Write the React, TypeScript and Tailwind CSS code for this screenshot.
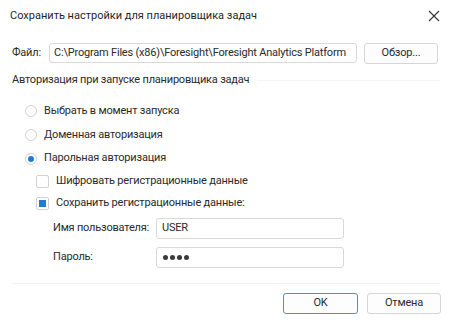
import React from "react";

function Radio({ checked, label }: { checked?: boolean; label: string }) {
  return (
    <div className="flex items-center">
      <div className="w-[12px] h-[12px] rounded-full border border-[#d2d2d2] bg-white flex items-center justify-center">
        {checked && <div className="w-[6px] h-[6px] rounded-full bg-[#1e7bd6]" />}
      </div>
      <span className="ml-[7px] whitespace-nowrap">{label}</span>
    </div>
  );
}

function Check({ checked, label }: { checked?: boolean; label: string }) {
  return (
    <div className="flex items-center">
      <div className="w-[13px] h-[13px] rounded-[2px] border border-[#d2d2d2] bg-white flex items-center justify-center">
        {checked && <div className="w-[7px] h-[7px] bg-[#1e7bd6]" />}
      </div>
      <span className="ml-[7px] whitespace-nowrap">{label}</span>
    </div>
  );
}

export default function App() {
  return (
    <div
      className="w-[451px] h-[326px] bg-white text-[#2a2a2a] text-[11px] tracking-[-0.2px] flex flex-col overflow-hidden"
      style={{ fontFamily: 'Roboto, "Noto Sans", sans-serif' }}
    >
      {/* Title bar */}
      <div className="h-[32px] flex items-center justify-between pl-[10px] pr-[10px] shrink-0">
        <span className="text-[11px] tracking-normal text-[#1f1f1f] whitespace-nowrap">Сохранить настройки для планировщика задач</span>
        <svg width="12" height="12" viewBox="0 0 12 12" className="mr-[1px]">
          <path d="M1 1 L11 11 M11 1 L1 11" stroke="#333" strokeWidth="1.1" fill="none" />
        </svg>
      </div>

      {/* File row */}
      <div className="mt-[10px] h-[22px] flex items-center pl-[12px] shrink-0">
        <span className="w-[37px] whitespace-nowrap">Файл:</span>
        <div className="w-[308px] h-[20px] border border-[#d9d9d9] rounded-[3px] flex items-center pl-[4px] whitespace-nowrap overflow-hidden">
          C:\Program Files (x86)\Foresight\Foresight Analytics Platform
        </div>
        <div className="ml-[7px] w-[74px] h-[21px] border border-[#d6d6d6] rounded-[3px] bg-[#fdfdfd] flex items-center justify-center whitespace-nowrap">
          Обзор...
        </div>
      </div>

      {/* Group label */}
      <div className="mt-[8px] h-[16px] flex items-center pl-[12px] pr-[11px] shrink-0">
        <span className="whitespace-nowrap">Авторизация при запуске планировщика задач</span>
        <div className="flex-1 h-px bg-[#f4f4f4] ml-[8px]" />
      </div>

      {/* Radios */}
      <div className="mt-[11px] pl-[25px] flex flex-col shrink-0">
        <div className="h-[24px] flex items-center">
          <Radio label="Выбрать в момент запуска" />
        </div>
        <div className="h-[24px] flex items-center">
          <Radio label="Доменная авторизация" />
        </div>
        <div className="h-[23px] flex items-center">
          <Radio checked label="Парольная авторизация" />
        </div>
      </div>

      {/* Checkboxes */}
      <div className="pl-[36px] flex flex-col shrink-0">
        <div className="h-[22px] flex items-center">
          <Check label="Шифровать регистрационные данные" />
        </div>
        <div className="h-[23px] flex items-center">
          <Check checked label="Сохранить регистрационные данные:" />
        </div>
      </div>

      {/* Credentials */}
      <div className="mt-[3px] pl-[53px] flex flex-col shrink-0">
        <div className="h-[21px] flex items-center">
          <span className="w-[103px] whitespace-nowrap">Имя пользователя:</span>
          <div className="w-[188px] h-[21px] border border-[#d9d9d9] rounded-[3px] flex items-center pl-[5px]">
            USER
          </div>
        </div>
        <div className="mt-[8px] h-[21px] flex items-center">
          <span className="w-[103px] whitespace-nowrap">Пароль:</span>
          <div className="w-[188px] h-[21px] border border-[#d9d9d9] rounded-[3px] flex items-center pl-[6px] gap-[2px]">
            <span className="w-[5px] h-[5px] rounded-full bg-[#3a3a3a]" />
            <span className="w-[5px] h-[5px] rounded-full bg-[#3a3a3a]" />
            <span className="w-[5px] h-[5px] rounded-full bg-[#3a3a3a]" />
            <span className="w-[5px] h-[5px] rounded-full bg-[#3a3a3a]" />
          </div>
        </div>
      </div>

      {/* Separator */}
      <div className="mt-[15px] mx-[11px] h-px bg-[#f4f4f4] shrink-0" />

      {/* Buttons */}
      <div className="mt-[9px] flex justify-end pr-[10px] gap-[9px] shrink-0">
        <div className="w-[75px] h-[21px] border border-[#4a90cf] rounded-[3px] bg-[#fdfdfd] flex items-center justify-center">
          OK
        </div>
        <div className="w-[74px] h-[21px] border border-[#d6d6d6] rounded-[3px] bg-[#fdfdfd] flex items-center justify-center">
          Отмена
        </div>
      </div>
    </div>
  );
}
